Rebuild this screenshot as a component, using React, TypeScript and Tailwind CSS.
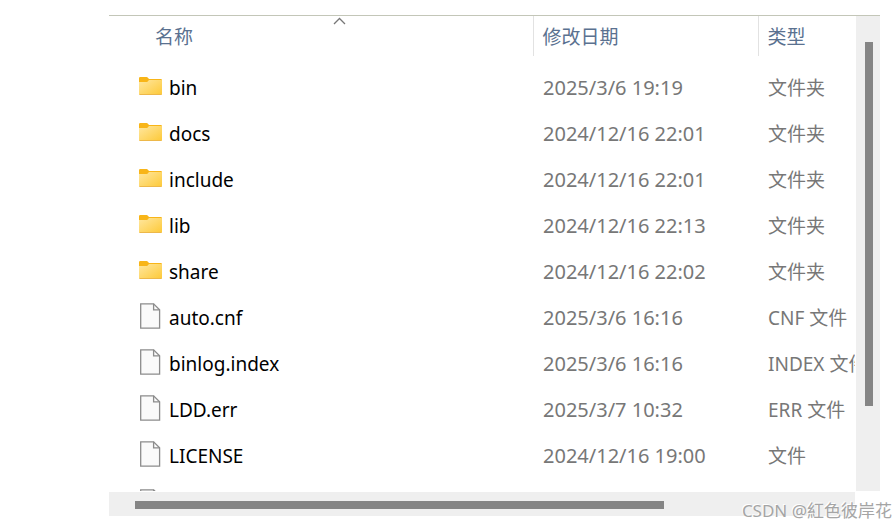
type Entry = {
    name: string;
    date: string;
    type: string;
    folder?: boolean;
};

const entries: Entry[] = [
    { name: "bin", date: "2025/3/6 19:19", type: "文件夹", folder: true },
    { name: "docs", date: "2024/12/16 22:01", type: "文件夹", folder: true },
    { name: "include", date: "2024/12/16 22:01", type: "文件夹", folder: true },
    { name: "lib", date: "2024/12/16 22:13", type: "文件夹", folder: true },
    { name: "share", date: "2024/12/16 22:02", type: "文件夹", folder: true },
    { name: "auto.cnf", date: "2025/3/6 16:16", type: "CNF 文件" },
    { name: "binlog.index", date: "2025/3/6 16:16", type: "INDEX 文件" },
    { name: "LDD.err", date: "2025/3/7 10:32", type: "ERR 文件" },
    { name: "LICENSE", date: "2024/12/16 19:00", type: "文件" },
];

function FolderIcon() {
    return (
        <svg width="23" height="18" viewBox="0 0 23 18" className="shrink-0" aria-hidden="true">
            <defs>
                <linearGradient id="folder" x1="0" y1="0" x2="1" y2="1">
                    <stop offset="0" stopColor="#ffe7a0" />
                    <stop offset="1" stopColor="#fdc937" />
                </linearGradient>
            </defs>
            <path d="M0 1.2Q0 0 1.2 0H7.6Q8.2 0 8.7 .5L10 2H21.8Q23 2 23 3.2V9H0Z" fill="#f8b518" />
            <path d="M0 5H8.2L10 3H22.5Q23 3 23 3.8V16.8Q23 18 21.8 18H1.2Q0 18 0 16.8Z" fill="url(#folder)" />
            <path d="M.5 17.5H22.5" stroke="#edb84a" />
        </svg>
    );
}

function FileIcon() {
    return (
        <svg width="22" height="26" viewBox="0 0 22 26" className="shrink-0" aria-hidden="true">
            <path d="M1.7 .8H14.6L20.6 6.8V25.2H1.7Z" fill="#fafafa" stroke="#8c8c8c" strokeWidth="1.3" />
            <path d="M14.6 .8V6.8H20.6" fill="none" stroke="#8c8c8c" strokeWidth="1.3" />
        </svg>
    );
}

function Row({ name, date, type, folder }: Entry) {
    return (
        <tr className="h-[46px] text-[#777777]">
            <td className="pl-[30px]">
                <div className="flex items-center text-black">
                    <div className="flex w-[30px] pb-[5px]">
                        {folder ? <FolderIcon /> : <FileIcon />}
                    </div>
                    <span>{name}</span>
                </div>
            </td>
            <td className="pl-[10px] text-xl leading-6">{date}</td>
            <td className="pl-[10px]">{type}</td>
        </tr>
    );
}

export default function App() {
    return (
        <div className="relative flex h-screen flex-col overflow-hidden bg-white pt-[15px] pr-4 pb-[10px] pl-[109px] font-['Noto_Sans','Noto_Sans_CJK_SC',sans-serif] text-[19px] leading-6">
            <div className="flex min-h-0 flex-1 gap-px border-t border-[#c3c6b8]">
                <div className="min-w-0 flex-1 overflow-hidden">
                    <table className="w-full table-fixed whitespace-nowrap">
                        <colgroup>
                            <col />
                            <col className="w-[225px]" />
                            <col className="w-[97px]" />
                        </colgroup>
                        <thead className="text-left text-[#5a7190]">
                            <tr className="h-10">
                                <th className="relative pt-[2px] pl-[46px] font-normal">
                                    <button>名称</button>
                                    <svg width="13" height="8" viewBox="0 0 13 8" className="absolute top-px left-56" aria-hidden="true">
                                        <path d="M1 7L6.5 1.5L12 7" fill="none" stroke="#777777" strokeWidth="1.3" />
                                    </svg>
                                </th>
                                <th className="border-l border-[#e2e2e2] pt-[2px] pl-[9px] font-normal">
                                    <button>修改日期</button>
                                </th>
                                <th className="border-l border-[#e2e2e2] pt-[2px] pl-[9px] font-normal">
                                    <button>类型</button>
                                </th>
                            </tr>
                        </thead>
                        <tbody>
                            <tr className="h-[9px]">
                                <td colSpan={3} />
                            </tr>
                            {entries.map((entry) => (
                                <Row key={entry.name} {...entry} />
                            ))}
                            {/* next file, cut off by the bottom scrollbar */}
                            <tr>
                                <td className="pt-[10px] pl-[30px]">
                                    <FileIcon />
                                </td>
                            </tr>
                        </tbody>
                    </table>
                </div>
                <div className="w-6 bg-[#efefef] px-[9px] pt-[26px]">
                    <div className="h-[364px] w-2 bg-[#858585]" />
                </div>
            </div>
            <div className="mt-px mr-[25px] h-6 bg-[#efefef] pt-[9px] pl-[26px]">
                <div className="h-2 w-[529px] bg-[#858585]" />
            </div>
            <p className="absolute right-1 bottom-[3px] text-[17px] leading-6 whitespace-nowrap text-[#a5a5a5] [text-shadow:-1px_-1px_0_#ffffff]">
                CSDN @紅色彼岸花
            </p>
        </div>
    );
}
